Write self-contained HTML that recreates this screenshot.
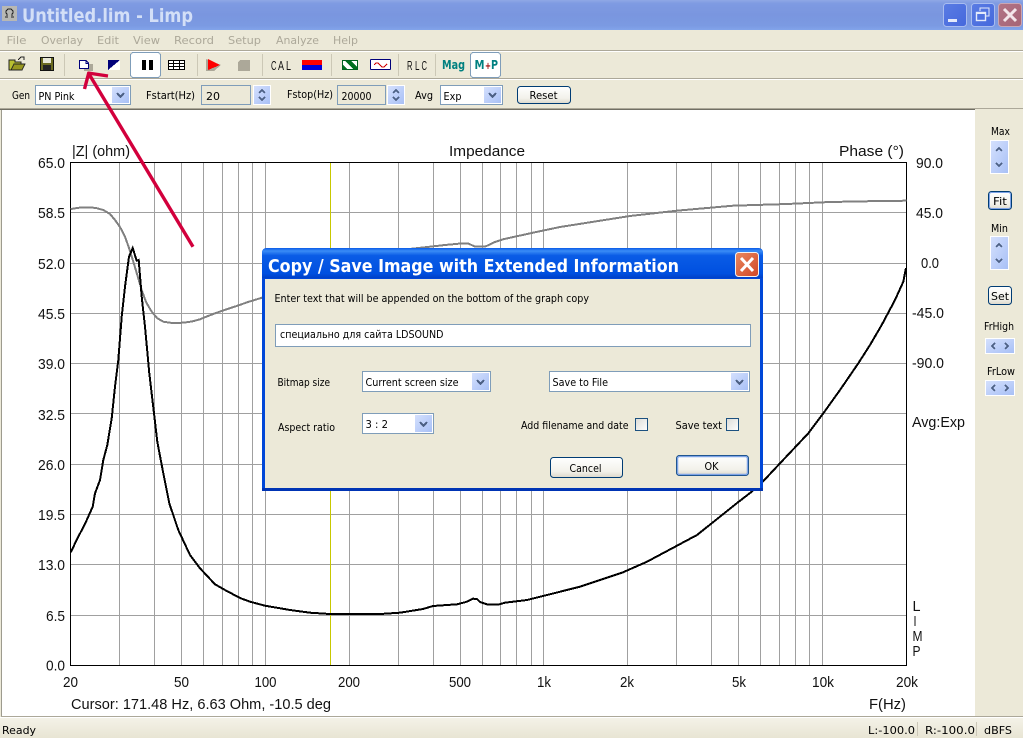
<!DOCTYPE html>
<html><head><meta charset="utf-8"><title>Untitled.lim - Limp</title>
<style>
html,body{margin:0;padding:0;background:#ece9d8;width:1023px;height:738px;overflow:hidden}
svg{display:block;position:absolute;left:0;top:0}
text{font-family:"DejaVu Sans","Liberation Sans",sans-serif;font-size:11px;fill:#000;white-space:pre}
.g{font-family:"Liberation Sans",sans-serif;font-size:15px;fill:#111}
.m{fill:#aca899}
.tl{font-family:"Liberation Sans",sans-serif;font-size:13px;fill:#111}
.c{shape-rendering:crispEdges}
</style></head><body>
<svg width="1023" height="738" viewBox="0 0 1023 738" xmlns="http://www.w3.org/2000/svg">
<defs>
<linearGradient id="tb" x1="0" y1="0" x2="0" y2="1"><stop offset="0" stop-color="#90a8e6"/><stop offset=".12" stop-color="#7e9ae2"/><stop offset=".5" stop-color="#7a96df"/><stop offset=".85" stop-color="#7b9ae2"/><stop offset="1" stop-color="#82a4ea"/></linearGradient>
<linearGradient id="dt" x1="0" y1="0" x2="0" y2="1"><stop offset="0" stop-color="#0a5be8"/><stop offset=".1" stop-color="#3a8cf6"/><stop offset=".25" stop-color="#0a5ce6"/><stop offset=".85" stop-color="#0050e0"/><stop offset="1" stop-color="#0040c8"/></linearGradient>
<linearGradient id="sp" x1="0" y1="0" x2="1" y2="1"><stop offset="0" stop-color="#d4e0fd"/><stop offset="1" stop-color="#a8c0f6"/></linearGradient>
<linearGradient id="bt" x1="0" y1="0" x2="0" y2="1"><stop offset="0" stop-color="#fff"/><stop offset=".7" stop-color="#f2f1ea"/><stop offset="1" stop-color="#dcd8cb"/></linearGradient>
<linearGradient id="wb" x1="0" y1="0" x2="1" y2="1"><stop offset="0" stop-color="#5a7ce4"/><stop offset="1" stop-color="#4568dc"/></linearGradient>
<linearGradient id="xb" x1="0" y1="0" x2="1" y2="1"><stop offset="0" stop-color="#b27486"/><stop offset="1" stop-color="#a66476"/></linearGradient>
<linearGradient id="dx" x1="0" y1="0" x2="1" y2="1"><stop offset="0" stop-color="#ea8a60"/><stop offset="1" stop-color="#cf4526"/></linearGradient>
<linearGradient id="st" x1="0" y1="0" x2="0" y2="1"><stop offset="0" stop-color="#f4f2e8"/><stop offset="1" stop-color="#e8e5d4"/></linearGradient>
<linearGradient id="ck" x1="0" y1="0" x2="1" y2="1"><stop offset="0" stop-color="#dcdcd7"/><stop offset="1" stop-color="#fff"/></linearGradient>
</defs>

<!-- window background -->
<rect width="1023" height="738" fill="#ece9d8"/>

<!-- title bar -->
<rect width="1023" height="30" fill="url(#tb)"/>
<rect x="2" y="6" width="15" height="15" fill="#b8b8b4"/>
<path d="M7 16 L7 14 L6 13 L6 11 L8 9 L11 9 L13 11 L13 13 L12 14 L12 16 M5 17 H8 M11 17 H14" fill="none" stroke="#222" stroke-width="1" class="c"/>
<text x="22" y="22" textLength="171" lengthAdjust="spacingAndGlyphs" style="font-size:19px;font-weight:bold;fill:#d3dff7">Untitled.lim - Limp</text>

<rect x="943.5" y="3.5" width="23" height="23" rx="3" fill="url(#wb)" stroke="#a8bcf0"/>
<rect x="948" y="19" width="9" height="3" fill="#e4eafa"/>
<rect x="971.5" y="3.5" width="23" height="23" rx="3" fill="url(#wb)" stroke="#a8bcf0"/>
<path d="M980 11 V8 H989 V16 H986" fill="none" stroke="#e4eafa" stroke-width="1.4" class="c"/>
<rect x="976.5" y="12.5" width="9" height="8" fill="none" stroke="#e4eafa" stroke-width="1.4"/>
<rect x="976" y="12" width="10" height="2" fill="#e4eafa"/>
<rect x="998.5" y="3.5" width="23" height="23" rx="3" fill="url(#xb)" stroke="#c9a7b4"/>
<path d="M1004 9 L1016 21 M1016 9 L1004 21" stroke="#f3e6ea" stroke-width="3"/>

<!-- menu bar -->
<text class="m" x="6.5" y="44" textLength="20" lengthAdjust="spacingAndGlyphs">File</text>
<text class="m" x="41" y="44" textLength="42" lengthAdjust="spacingAndGlyphs">Overlay</text>
<text class="m" x="97" y="44" textLength="22" lengthAdjust="spacingAndGlyphs">Edit</text>
<text class="m" x="133" y="44" textLength="27" lengthAdjust="spacingAndGlyphs">View</text>
<text class="m" x="174" y="44" textLength="40" lengthAdjust="spacingAndGlyphs">Record</text>
<text class="m" x="228" y="44" textLength="33" lengthAdjust="spacingAndGlyphs">Setup</text>
<text class="m" x="276" y="44" textLength="43" lengthAdjust="spacingAndGlyphs">Analyze</text>
<text class="m" x="333" y="44" textLength="25" lengthAdjust="spacingAndGlyphs">Help</text>

<rect y="50" width="1023" height="1" fill="#aca899"/><rect y="51" width="1023" height="1" fill="#fff"/>
<rect y="78" width="1023" height="1" fill="#aca899"/><rect y="79" width="1023" height="1" fill="#fff"/>

<!-- toolbar -->
<g class="c">
<path d="M9 70 V60 H15 V62 H21 V64 H25 L22 70 Z" fill="#b8c030" stroke="#222" stroke-width="1"/>
<path d="M11 70 L14 64 H25 L22 70 Z" fill="#989820" stroke="#222" stroke-width="1"/>
<path d="M18 60 L21 57 M21 57 H24 V60" fill="none" stroke="#222"/>
<rect x="40.5" y="57.5" width="13" height="13" fill="#6a6a20" stroke="#111"/>
<rect x="43" y="58" width="8" height="5" fill="#e8e8d8"/>
<rect x="43" y="65" width="8" height="5" fill="#222"/>
<rect x="84" y="64" width="9" height="7" fill="#aca899"/>
<path d="M79.5 60.5 H86 L88.5 63 V68.5 H79.5 Z" fill="#fff" stroke="#00007a"/>
<path d="M86 60.5 V63.5 H88.5" fill="none" stroke="#00007a"/>
<rect x="108" y="60" width="12" height="10" fill="#fff"/>
<path d="M108 60 H120 L108 70 Z" fill="#00007a"/>
<rect x="130.5" y="52.5" width="30" height="25" rx="3" fill="#fff" stroke="#7f9db9"/>
<rect x="142" y="60" width="4" height="10" fill="#000"/><rect x="149" y="60" width="4" height="10" fill="#000"/>
<rect x="168.5" y="60.5" width="16" height="9" fill="#fff" stroke="#000"/>
<path d="M168 63.5 H185 M168 66.5 H185 M173.5 60 V70 M179.5 60 V70" stroke="#000" fill="none"/>
<rect x="64" y="54" width="1" height="22" fill="#ccc8b6"/>
<rect x="197" y="54" width="1" height="22" fill="#ccc8b6"/>
<rect x="262" y="54" width="1" height="22" fill="#ccc8b6"/>
<rect x="331" y="54" width="1" height="22" fill="#ccc8b6"/>
<rect x="398" y="54" width="1" height="22" fill="#ccc8b6"/>
<rect x="435" y="54" width="1" height="22" fill="#ccc8b6"/>
<path d="M206 59 V71 H214 L221 65 Z" fill="#aca899"/>
<path d="M208 59 V70 L220 65 Z" fill="#f00"/>
<path d="M240 60 H250 V71 H238 V62 Z" fill="#aca899"/>
<path d="M302 60 H322 V70 H302 Z" fill="#0000dd"/>
<path d="M302 60 H322 V65 H302 Z" fill="#f00"/>
<path d="M302 65 H314 L322 60 V66 H302 Z" fill="#0000dd" opacity="0"/>
<rect x="342" y="60" width="16" height="10" fill="#fff"/>
<path d="M342 60 H350 L358 68 V70 H354 L344 60 M342 64 L348 70 H342 Z" fill="#007020"/>
<path d="M342.5 60.5 H357.5 V69.5 H342.5 Z" fill="none" stroke="#006020"/>
<rect x="370.5" y="59.5" width="20" height="10" rx="1" fill="#fff" stroke="#00007a"/>
<path d="M374 65 L376 63 H378 L380 65 L382 67 H384 L387 64" fill="none" stroke="#d00000"/>
<rect x="470.5" y="52.5" width="30" height="25" rx="3" fill="#fff" stroke="#7f9db9"/>
</g>
<text class="tl" x="271" y="70" textLength="5.5" lengthAdjust="spacingAndGlyphs">C</text>
<text class="tl" x="278" y="70" textLength="6" lengthAdjust="spacingAndGlyphs">A</text>
<text class="tl" x="286" y="70" textLength="5" lengthAdjust="spacingAndGlyphs">L</text>
<text class="tl" x="407" y="70" textLength="5.5" lengthAdjust="spacingAndGlyphs">R</text>
<text class="tl" x="415" y="70" textLength="4.5" lengthAdjust="spacingAndGlyphs">L</text>
<text class="tl" x="421.5" y="70" textLength="5.5" lengthAdjust="spacingAndGlyphs">C</text>
<text x="442" y="69" textLength="23" lengthAdjust="spacingAndGlyphs" style="font-size:12px;font-weight:bold;fill:#008080">Mag</text>
<text x="474.5" y="69" style="font-size:12px;font-weight:bold;fill:#008080" textLength="10" lengthAdjust="spacingAndGlyphs">M</text>
<text x="485" y="69" style="font-size:10px;font-weight:bold;fill:#900" textLength="6" lengthAdjust="spacingAndGlyphs">+</text>
<text x="491" y="69" style="font-size:12px;font-weight:bold;fill:#008080" textLength="7" lengthAdjust="spacingAndGlyphs">P</text>

<!-- control bar -->
<rect y="108" width="1023" height="1" fill="#aca899"/>
<text x="12" y="99" textLength="18" lengthAdjust="spacingAndGlyphs">Gen</text>
<g class="c">
<rect x="35.5" y="85.5" width="95" height="19" fill="#fff" stroke="#7f9db9"/>
<rect x="112" y="87" width="17" height="16" fill="url(#sp)"/>
<path d="M117 93 L120.5 97 L124 93" fill="none" stroke="#4d6185" stroke-width="2"/>
<rect x="201.5" y="85.5" width="49" height="19" fill="#ece9d8" stroke="#7f9db9"/>
<rect x="253" y="85" width="18" height="20" fill="#fff"/>
<rect x="254" y="86" width="16" height="18" fill="url(#sp)"/>
<path d="M259 93 L262 90 L265 93 M259 97 L262 100 L265 97" fill="none" stroke="#4d6185" stroke-width="1.5"/>
<rect x="337.5" y="85.5" width="48" height="19" fill="#ece9d8" stroke="#7f9db9"/>
<rect x="387" y="85" width="18" height="20" fill="#fff"/>
<rect x="388" y="86" width="16" height="18" fill="url(#sp)"/>
<path d="M393 93 L396 90 L399 93 M393 97 L396 100 L399 97" fill="none" stroke="#4d6185" stroke-width="1.5"/>
<rect x="440.5" y="85.5" width="62" height="19" fill="#fff" stroke="#7f9db9"/>
<rect x="484" y="87" width="17" height="16" fill="url(#sp)"/>
<path d="M489 93 L492.5 97 L496 93" fill="none" stroke="#4d6185" stroke-width="2"/>
</g>
<rect x="517.5" y="86.5" width="53" height="17" rx="3" fill="url(#bt)" stroke="#003c74"/>
<text x="38.5" y="100" textLength="36" lengthAdjust="spacingAndGlyphs">PN Pink</text>
<text x="146" y="99" textLength="49" lengthAdjust="spacingAndGlyphs">Fstart(Hz)</text>
<text x="206" y="100" textLength="14" lengthAdjust="spacingAndGlyphs">20</text>
<text x="287" y="98" textLength="46" lengthAdjust="spacingAndGlyphs">Fstop(Hz)</text>
<text x="341.5" y="100" textLength="30" lengthAdjust="spacingAndGlyphs">20000</text>
<text x="415" y="99" textLength="18" lengthAdjust="spacingAndGlyphs">Avg</text>
<text x="443.5" y="100" textLength="18" lengthAdjust="spacingAndGlyphs">Exp</text>
<text x="529.5" y="99" textLength="28" lengthAdjust="spacingAndGlyphs">Reset</text>

<!-- graph area -->
<rect x="2" y="110" width="973" height="606" fill="#fff"/>
<rect x="0" y="109" width="975" height="1" fill="#716f64"/>
<rect x="1" y="110" width="1" height="607" fill="#9d9b8e"/>
<rect x="1" y="716" width="1022" height="1" fill="#aca899"/>
<rect x="0" y="717" width="1023" height="1" fill="#fff"/>

<!-- grid -->
<path class="c" fill="none" stroke="#a0a0a0" stroke-width="1" d="M119.5 162V665M154.5 162V665M181.5 162V665M203.5 162V665M222.5 162V665M238.5 162V665M252.5 162V665M265.5 162V665M349.5 162V665M398.5 162V665M433.5 162V665M460.5 162V665M482.5 162V665M500.5 162V665M516.5 162V665M531.5 162V665M543.5 162V665M627.5 162V665M676.5 162V665M711.5 162V665M738.5 162V665M760.5 162V665M779.5 162V665M795.5 162V665M809.5 162V665M822.5 162V665M70 212.5H906M70 263.5H906M70 313.5H906M70 363.5H906M70 413.5H906M70 464.5H906M70 514.5H906M70 564.5H906M70 615.5H906"/>
<rect class="c" x="330" y="163" width="1" height="502" fill="#c8c800"/>
<rect class="c" x="70.5" y="162.5" width="836" height="503" fill="none" stroke="#000"/>

<!-- phase curve -->
<polyline class="c" fill="none" stroke="#808080" stroke-width="2" points="70.7,209 80,207.6 88.3,207.3 96,208 103.3,210 110,214 115,220 120,227 125,236.7 129,248 133.3,261.7 137,274 141.7,290 146,302 151.7,311.7 157,318 163.3,321.7 172,323 183.3,322.7 192,321.5 200,319.3 208,316 216.7,312.7 226,309.5 236.7,306 248,302 260,298.3 300,285 350,268 400,250 430,246.7 445,245 463,243.3 468,243.3 475,246.7 485,246.7 495,242 503,239.3 533,232.7 560,227 590,222.3 630,216 676.7,210.7 733,205.7 787,204 830,202 870,201.2 906.7,200.7"/>

<!-- impedance curve -->
<polyline class="c" fill="none" stroke="#000" stroke-width="2" points="70.7,552.3 76.7,540 86,521.7 92.7,506.7 95,493.3 100,480 103.3,460 107.3,445 111.7,418.3 115,386.7 118.3,360 121.7,316.7 125,286.7 129,256.7 132.7,248 136.7,260.7 138.7,260 141.7,296.7 145,326.7 149.3,373.3 154,413.3 157.3,441.7 163.3,473.3 169.3,503.3 178.3,530 190,555 200,568.3 215,584.3 225,590 240,598 250,601.7 265,605.7 290,610 310,612.7 330,614 360,614 380,614 400,612.7 423,609 433,606 457,604.3 466,602 473,598.7 477,599 480,602 488,604.7 498,604.7 505,602.7 527,600 543,596 580,586.7 623,572.3 647,561.7 677,545.7 697,535 711.7,523.3 736.7,503.3 751.7,491.7 765,479.3 780,463.3 808.3,433.3 823.3,413.3 840,390 858.3,363.3 870,345 881.7,325 895,300 903.3,281.7 906,268"/>

<!-- arrow -->
<path d="M193 246.7 L89 74 M88 73 L108 76 M89 72 L84.5 89" fill="none" stroke="#d2003c" stroke-width="3.4"/>

<!-- axis labels -->
<text class="g" x="72" y="156" textLength="58" lengthAdjust="spacingAndGlyphs">|Z| (ohm)</text>
<text class="g" x="449" y="156" textLength="76" lengthAdjust="spacingAndGlyphs">Impedance</text>
<text class="g" x="839" y="156" textLength="65" lengthAdjust="spacingAndGlyphs">Phase (°)</text>
<text class="g" x="38" y="168" textLength="27" lengthAdjust="spacingAndGlyphs">65.0</text>
<text class="g" x="38" y="218" textLength="27" lengthAdjust="spacingAndGlyphs">58.5</text>
<text class="g" x="38" y="269" textLength="27" lengthAdjust="spacingAndGlyphs">52.0</text>
<text class="g" x="38" y="319" textLength="27" lengthAdjust="spacingAndGlyphs">45.5</text>
<text class="g" x="38" y="369" textLength="27" lengthAdjust="spacingAndGlyphs">39.0</text>
<text class="g" x="38" y="420" textLength="27" lengthAdjust="spacingAndGlyphs">32.5</text>
<text class="g" x="38" y="470" textLength="27" lengthAdjust="spacingAndGlyphs">26.0</text>
<text class="g" x="38" y="520" textLength="27" lengthAdjust="spacingAndGlyphs">19.5</text>
<text class="g" x="38" y="570" textLength="27" lengthAdjust="spacingAndGlyphs">13.0</text>
<text class="g" x="46" y="621" textLength="19" lengthAdjust="spacingAndGlyphs">6.5</text>
<text class="g" x="46" y="670.5" textLength="19" lengthAdjust="spacingAndGlyphs">0.0</text>
<text class="g" x="916" y="168" textLength="27" lengthAdjust="spacingAndGlyphs">90.0</text>
<text class="g" x="916" y="218" textLength="27" lengthAdjust="spacingAndGlyphs">45.0</text>
<text class="g" x="921" y="268" textLength="18" lengthAdjust="spacingAndGlyphs">0.0</text>
<text class="g" x="912" y="318" textLength="32" lengthAdjust="spacingAndGlyphs">-45.0</text>
<text class="g" x="912" y="368" textLength="32" lengthAdjust="spacingAndGlyphs">-90.0</text>
<text class="g" x="912" y="427" textLength="53" lengthAdjust="spacingAndGlyphs">Avg:Exp</text>
<text class="g" x="912.5" y="611" textLength="8" lengthAdjust="spacingAndGlyphs">L</text>
<text class="g" x="913.5" y="626" textLength="3" lengthAdjust="spacingAndGlyphs">I</text>
<text class="g" x="912.5" y="641" textLength="10" lengthAdjust="spacingAndGlyphs">M</text>
<text class="g" x="912.5" y="656" textLength="8" lengthAdjust="spacingAndGlyphs">P</text>
<text class="g" x="63" y="687" textLength="15" lengthAdjust="spacingAndGlyphs">20</text>
<text class="g" x="174" y="687" textLength="15" lengthAdjust="spacingAndGlyphs">50</text>
<text class="g" x="254.5" y="687" textLength="22" lengthAdjust="spacingAndGlyphs">100</text>
<text class="g" x="338" y="687" textLength="22" lengthAdjust="spacingAndGlyphs">200</text>
<text class="g" x="449" y="687" textLength="22" lengthAdjust="spacingAndGlyphs">500</text>
<text class="g" x="537" y="687" textLength="14" lengthAdjust="spacingAndGlyphs">1k</text>
<text class="g" x="620" y="687" textLength="14" lengthAdjust="spacingAndGlyphs">2k</text>
<text class="g" x="732" y="687" textLength="14" lengthAdjust="spacingAndGlyphs">5k</text>
<text class="g" x="812" y="687" textLength="22" lengthAdjust="spacingAndGlyphs">10k</text>
<text class="g" x="896" y="687" textLength="22" lengthAdjust="spacingAndGlyphs">20k</text>
<text class="g" x="71" y="709" textLength="260" lengthAdjust="spacingAndGlyphs">Cursor: 171.48 Hz, 6.63 Ohm, -10.5 deg</text>
<text class="g" x="869" y="709" textLength="37" lengthAdjust="spacingAndGlyphs">F(Hz)</text>

<!-- right panel -->
<text x="991" y="135" textLength="19" lengthAdjust="spacingAndGlyphs">Max</text>
<text x="991" y="232" textLength="17" lengthAdjust="spacingAndGlyphs">Min</text>
<text x="984" y="330" textLength="30" lengthAdjust="spacingAndGlyphs">FrHigh</text>
<text x="987" y="375" textLength="28" lengthAdjust="spacingAndGlyphs">FrLow</text>
<g class="c">
<rect x="990" y="140" width="19" height="34" fill="#fff"/><rect x="991" y="141" width="17" height="32" fill="url(#sp)"/>
<path d="M996 151 L999 148 L1002 151 M996 163 L999 166 L1002 163" fill="none" stroke="#4d6185" stroke-width="1.5"/>
<rect x="990" y="236" width="19" height="34" fill="#fff"/><rect x="991" y="237" width="17" height="32" fill="url(#sp)"/>
<path d="M996 247 L999 244 L1002 247 M996 259 L999 262 L1002 259" fill="none" stroke="#4d6185" stroke-width="1.5"/>
<rect x="985" y="338" width="30" height="16" fill="#fff"/><rect x="986" y="339" width="28" height="14" fill="url(#sp)"/>
<path d="M995 343 L992 346 L995 349 M1005 343 L1008 346 L1005 349" fill="none" stroke="#4d6185" stroke-width="1.5"/>
<rect x="985" y="380" width="30" height="16" fill="#fff"/><rect x="986" y="381" width="28" height="14" fill="url(#sp)"/>
<path d="M995 385 L992 388 L995 391 M1005 385 L1008 388 L1005 391" fill="none" stroke="#4d6185" stroke-width="1.5"/>
</g>
<rect x="988.5" y="191.5" width="23" height="18" rx="3" fill="url(#bt)" stroke="#003c74"/>
<rect x="989.5" y="192.5" width="21" height="16" rx="2" fill="none" stroke="#7ea3e6"/>
<text x="993" y="205" textLength="14" lengthAdjust="spacingAndGlyphs">Fit</text>
<rect x="988.5" y="286.5" width="23" height="18" rx="3" fill="url(#bt)" stroke="#003c74"/>
<text x="991" y="300" textLength="18" lengthAdjust="spacingAndGlyphs">Set</text>

<!-- status bar -->
<rect y="718" width="1023" height="20" fill="url(#st)"/>
<text x="2" y="734" textLength="34" lengthAdjust="spacingAndGlyphs">Ready</text>
<text x="868" y="734" textLength="47" lengthAdjust="spacingAndGlyphs">L:-100.0</text>
<text x="925" y="734" textLength="50" lengthAdjust="spacingAndGlyphs">R:-100.0</text>
<text x="984" y="734" textLength="28" lengthAdjust="spacingAndGlyphs">dBFS</text>
<rect x="917" y="722" width="1" height="14" fill="#cbc7b8"/>
<rect x="976" y="722" width="1" height="14" fill="#cbc7b8"/>

<!-- dialog -->
<path d="M262 491 V253 Q262 248 267 248 H758 Q763 248 763 253 V491 Z" fill="#0047d8"/>
<rect x="262" y="488" width="501" height="3" fill="#0034b4"/>
<path d="M262 278 V253 Q262 248 267 248 H758 Q763 248 763 253 V278 Z" fill="url(#dt)"/>
<rect x="265" y="279" width="495" height="209" fill="#ece9d8"/>
<text x="268" y="272" textLength="411" lengthAdjust="spacingAndGlyphs" style="font-size:18px;font-weight:bold;fill:#fff">Copy / Save Image with Extended Information</text>
<rect x="735.5" y="252.5" width="23" height="24" rx="3" fill="url(#dx)" stroke="#f2f2f2"/>
<path d="M741 258 L753 271 M753 258 L741 271" stroke="#fff" stroke-width="3"/>

<text x="274.5" y="302" textLength="314.5" lengthAdjust="spacingAndGlyphs">Enter text that will be appended on the bottom of the graph copy</text>
<g class="c">
<rect x="275.5" y="324.5" width="475" height="22" fill="#fff" stroke="#7f9db9"/>
<rect x="362.5" y="371.5" width="128" height="20" fill="#fff" stroke="#7f9db9"/>
<rect x="472" y="373" width="17" height="17" fill="url(#sp)"/>
<path d="M477 380 L480.5 384 L484 380" fill="none" stroke="#4d6185" stroke-width="2"/>
<rect x="549.5" y="371.5" width="200" height="20" fill="#fff" stroke="#7f9db9"/>
<rect x="731" y="373" width="17" height="17" fill="url(#sp)"/>
<path d="M736 380 L739.5 384 L743 380" fill="none" stroke="#4d6185" stroke-width="2"/>
<rect x="362.5" y="413.5" width="71" height="20" fill="#fff" stroke="#7f9db9"/>
<rect x="415" y="415" width="17" height="17" fill="url(#sp)"/>
<path d="M420 422 L423.5 426 L427 422" fill="none" stroke="#4d6185" stroke-width="2"/>
<rect x="635.5" y="418.5" width="12" height="12" fill="url(#ck)" stroke="#1c5180"/>
<rect x="726.5" y="418.5" width="12" height="12" fill="url(#ck)" stroke="#1c5180"/>
</g>
<text x="280" y="338" textLength="163.5" lengthAdjust="spacingAndGlyphs">специально для сайта LDSOUND</text>
<text x="277.5" y="386" textLength="52.5" lengthAdjust="spacingAndGlyphs">Bitmap size</text>
<text x="365.5" y="386" textLength="93" lengthAdjust="spacingAndGlyphs">Current screen size</text>
<text x="552.5" y="386" textLength="55.5" lengthAdjust="spacingAndGlyphs">Save to File</text>
<text x="278" y="431" textLength="57" lengthAdjust="spacingAndGlyphs">Aspect ratio</text>
<text x="365.5" y="428" textLength="22.5" lengthAdjust="spacingAndGlyphs">3 : 2</text>
<text x="521" y="429" textLength="107.5" lengthAdjust="spacingAndGlyphs">Add filename and date</text>
<text x="675.5" y="429" textLength="46.5" lengthAdjust="spacingAndGlyphs">Save text</text>
<rect x="550.5" y="457.5" width="72" height="20" rx="3" fill="url(#bt)" stroke="#003c74"/>
<text x="569.5" y="472" textLength="32" lengthAdjust="spacingAndGlyphs">Cancel</text>
<rect x="676.5" y="455.5" width="72" height="20" rx="3" fill="url(#bt)" stroke="#003c74"/>
<rect x="677.5" y="456.5" width="70" height="18" rx="2" fill="none" stroke="#7ea3e6" stroke-width="1.5"/>
<text x="704.5" y="470" textLength="14" lengthAdjust="spacingAndGlyphs">OK</text>
</svg>
</body></html>
